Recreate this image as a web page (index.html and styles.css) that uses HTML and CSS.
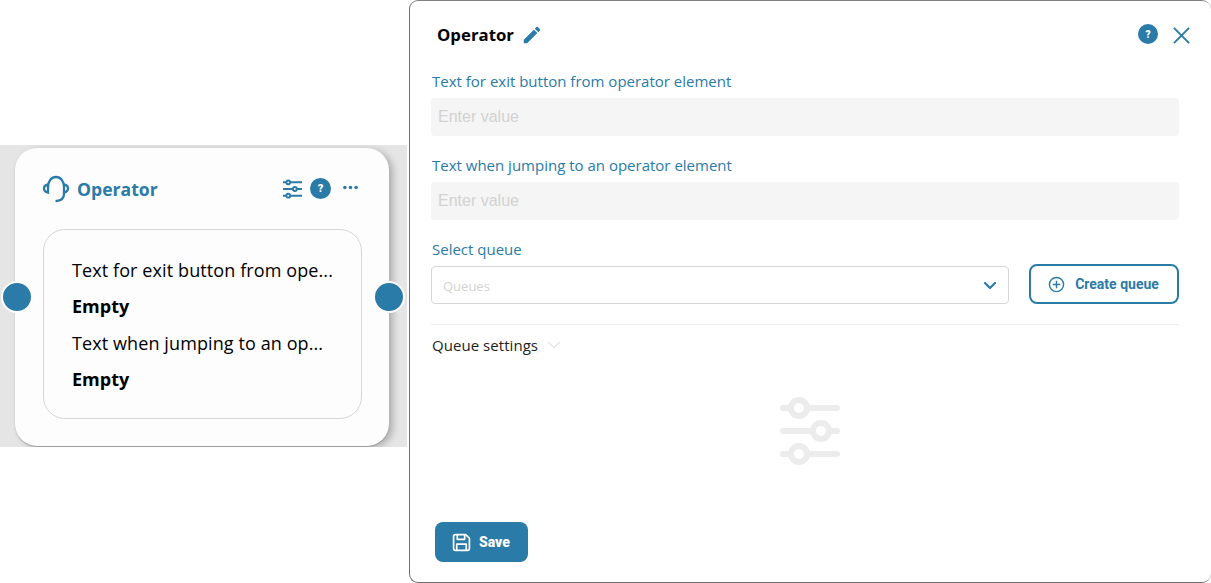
FILE: index.html
```html
<!DOCTYPE html>
<html lang="en">
<head>
    <meta charset="UTF-8">
    <title>Operator</title>
    <link rel="stylesheet" href="styles.css">
</head>
<body>
    <div class="canvas">
        <div class="node">
            <span class="port port-left"></span>
            <span class="port port-right"></span>
            <div class="node-head">
                <svg class="node-icon" viewBox="0 0 28 28" fill="none" stroke="#2a7ba8" stroke-width="2.300" stroke-linecap="round">
                    <path d="M6 12.500C6 6 9.500 2 14 2s8 4 8 10.500V19c0 4-3 6.500-7.500 7"/>
                    <path d="M6 9.500C3.500 10 2 11.500 2 13.500s1.500 3.500 4 4z"/>
                    <path d="M22 9.500c2.500.5 4 2 4 4s-1.500 3.500-4 4"/>
                </svg>
                <span class="node-title">Operator</span>
                <svg class="node-sliders" viewBox="0 0 20 20" fill="none" stroke="#2a7ba8" stroke-width="2.100">
                    <path d="M0 3h3.500M7.500 3H20M0 10h10.500M14.500 10H20M0 17h3.500M7.500 17H20"/>
                    <circle cx="5.500" cy="3" r="2"/><circle cx="12.500" cy="10" r="2"/><circle cx="5.500" cy="17" r="2"/>
                </svg>
                <span class="help node-help">?</span>
                <svg class="node-more" viewBox="0 0 16 4" fill="#2a7ba8">
                    <circle cx="2" cy="2" r="1.900"/><circle cx="8" cy="2" r="1.900"/><circle cx="14" cy="2" r="1.900"/>
                </svg>
            </div>
            <div class="node-body">
                <p class="node-line">Text for exit button from ope...</p>
                <p class="node-value">Empty</p>
                <p class="node-line">Text when jumping to an op...</p>
                <p class="node-value">Empty</p>
            </div>
        </div>
    </div>

    <div class="drawer">
        <div class="drawer-head">
            <span class="drawer-title">Operator</span>
            <svg class="pencil" viewBox="0 0 24 24" fill="#2a7ba8">
                <path d="M3 17.250V21h3.750L17.810 9.940l-3.750-3.750L3 17.250zM20.710 7.040a1 1 0 0 0 0-1.410l-2.340-2.340a1 1 0 0 0-1.410 0l-1.830 1.830 3.750 3.750 1.830-1.830z"/>
            </svg>
            <span class="help drawer-help">?</span>
            <svg class="close" viewBox="0 0 18 18" fill="none" stroke="#2a7ba8" stroke-width="2">
                <path d="M1 1l16 16M17 1L1 17"/>
            </svg>
        </div>

        <label class="field-label">Text for exit button from operator element</label>
        <input class="field-input" type="text" placeholder="Enter value">

        <label class="field-label">Text when jumping to an operator element</label>
        <input class="field-input" type="text" placeholder="Enter value">

        <label class="field-label">Select queue</label>
        <div class="queue-row">
            <div class="queue-select">
                <span class="queue-placeholder">Queues</span>
                <svg viewBox="0 0 14 9" fill="none" stroke="#2a7ba8" stroke-width="2.200" stroke-linecap="round" stroke-linejoin="round">
                    <path d="M2 2l5 5 5-5"/>
                </svg>
            </div>
            <button class="create-btn" type="button">
                <svg viewBox="0 0 18 18" fill="none" stroke="#2a7ba8" stroke-width="1.500">
                    <circle cx="9" cy="9" r="7.500"/>
                    <path d="M9 5v8M5 9h8"/>
                </svg>
                Create queue
            </button>
        </div>

        <div class="settings">
            <span>Queue settings</span>
            <svg viewBox="0 0 14 8" fill="none" stroke="#e6e6e6" stroke-width="1.400">
                <path d="M1 1l6 5.500L13 1"/>
            </svg>
        </div>

        <div class="empty">
            <svg viewBox="0 0 60 68" fill="none" stroke="#ececec">
                <path d="M3 11h54M3 34h54M3 57h54" stroke-width="6" stroke-linecap="round"/>
                <circle cx="19" cy="11" r="8" fill="#fff" stroke-width="6"/>
                <circle cx="41" cy="34" r="8" fill="#fff" stroke-width="6"/>
                <circle cx="19" cy="57" r="8" fill="#fff" stroke-width="6"/>
            </svg>
        </div>

        <button class="save-btn" type="button">
            <svg viewBox="0 0 18 18" fill="none" stroke="#fff" stroke-width="1.600" stroke-linejoin="round">
                <path d="M1.500 3a1.500 1.500 0 0 1 1.500-1.500h10L16.500 5v10a1.500 1.500 0 0 1-1.500 1.500H3A1.500 1.500 0 0 1 1.500 15z"/>
                <path d="M5 1.500V6h7V1.500M4.500 16.500V10.500h9v6"/>
            </svg>
            Save
        </button>
    </div>
</body>
</html>
```

FILE: styles.css
```css
* {
    box-sizing: border-box;
}
body {
    margin: 0;
    height: 583px;
    overflow: hidden;
    display: flex;
    background: #fff;
    font-family: "Open Sans", sans-serif;
}
.canvas {
    width: 407px;
    height: 302px;
    margin: 145px 2px 0 0;
    padding: 3px 0 0 15px;
    background: #e5e5e5;
    overflow: hidden;
}
.node {
    position: relative;
    width: 374px;
    height: 298px;
    padding: 27px 27px 0 28px;
    background: #fdfdfd;
    border-radius: 22px;
    box-shadow: 4px 2px 7px rgba(0,0,0,0.24), 0 1px 1px rgba(0,0,0,0.2);
}
.port {
    position: absolute;
    top: 133px;
    width: 32px;
    height: 32px;
    background: #2a7ba8;
    border: 2px solid #fff;
    border-radius: 50%;
}
.port-left {
    left: -14px;
}
.port-right {
    right: -16px;
}
.node-head {
    display: flex;
    align-items: center;
    height: 28px;
    margin-left: -1px;
}
.node-icon {
    width: 28px;
    height: 28px;
}
.node-title {
    margin-left: 7px;
    font-size: 17.600px;
    font-weight: 700;
    color: #2a7ba8;
    flex: 1;
}
.node-sliders {
    width: 19px;
    height: 22px;
}
.help {
    display: flex;
    align-items: center;
    justify-content: center;
    width: 21px;
    height: 21px;
    background: #2a7ba8;
    border-radius: 50%;
    color: #fff;
    font-family: Roboto, sans-serif;
    font-size: 11px;
    font-weight: 900;
}
.node-help {
    margin-left: 8px;
    margin-bottom: 1px;
}
.node-more {
    width: 15px;
    height: 5px;
    margin: 0 4px 3px 12px;
}
.node-body {
    height: 190px;
    margin-top: 26px;
    padding: 28px 0 0 28px;
    border: 1.500px solid #d6d6d6;
    border-radius: 22px;
}
.node-line, .node-value {
    margin: 0 0 12.400px;
    height: 24px;
    line-height: 24px;
    color: #000;
    white-space: nowrap;
}
.node-line {
    font-size: 18px;
    letter-spacing: 0.1px;
}
.node-value {
    font-size: 18px;
    font-weight: 700;
}
.drawer {
    display: flex;
    flex-direction: column;
    width: 802px;
    height: 583px;
    padding: 0 30px 0 22px;
    background: #fff;
    border: 1px solid #707070;
    border-right: 0;
    border-top-color: #808080;
    border-radius: 9px;
}
.drawer-head {
    display: flex;
    align-items: center;
    height: 34px;
    margin: 17px 0 0 5px;
}
.drawer-title {
    font-size: 16.800px;
    font-weight: 700;
    color: #000;
    margin-bottom: 1px;
}
.pencil {
    width: 22px;
    height: 22px;
    margin: 0 0 1px 7px;
}
.drawer-help {
    width: 20px;
    height: 20px;
    margin: 0 15px 2px auto;
    font-size: 10px;
}
.close {
    width: 17px;
    height: 17px;
    margin-right: -9px;
}
.field-label {
    display: block;
    margin-top: 19px;
    margin-bottom: 1px;
    height: 20px;
    line-height: 20px;
    font-size: 15px;
    color: #2a7ba8;
}
.field-input {
    display: block;
    width: 748px;
    height: 38px;
    margin: 6px 0 0 -1px;
    padding: 0 7px;
    background: #f5f5f5;
    border: 0;
    border-radius: 4px;
    font-family: "Liberation Sans", sans-serif;
    font-size: 16px;
}
.field-input::placeholder {
    color: #d2d2d2;
}
.queue-row {
    display: flex;
    align-items: flex-end;
    gap: 20px;
    width: 748px;
    height: 61px;
    margin: 4px 0 0 -1px;
    padding-bottom: 20px;
    border-bottom: 1px solid #efefef;
}
.queue-select {
    display: flex;
    align-items: center;
    justify-content: space-between;
    width: 578px;
    height: 38px;
    padding: 0 11px;
    border: 1px solid #d6d6d6;
    border-radius: 4px;
    font-size: 13px;
    color: #d2d2d2;
}
.queue-placeholder {
    margin-top: 1px;
}
.queue-select svg {
    width: 14px;
    height: 9px;
}
.create-btn {
    display: flex;
    align-items: center;
    justify-content: center;
    gap: 10px;
    width: 150px;
    height: 40px;
    padding: 0 1px 0 0;
    background: #fff;
    border: 2px solid #2a7ba8;
    border-radius: 8px;
    font-family: Roboto, sans-serif;
    font-size: 14px;
    font-weight: 700;
    color: #2a7ba8;
}
.create-btn svg {
    width: 17px;
    height: 17px;
}
.settings {
    display: flex;
    align-items: center;
    gap: 9px;
    height: 20px;
    margin-top: 10px;
    font-size: 15px;
    letter-spacing: 0.05px;
    color: #222;
}
.settings svg {
    width: 14px;
    height: 8px;
}
.empty {
    display: flex;
    justify-content: center;
    margin: 42px 0 0 6px;
}
.empty svg {
    width: 60px;
    height: 68px;
}
.save-btn {
    display: flex;
    align-items: center;
    gap: 8px;
    width: 93px;
    height: 40px;
    margin: 57px 0 0 3px;
    padding: 0 0 0 17px;
    background: #2a7ba8;
    border: 0;
    border-radius: 8px;
    font-family: Roboto, sans-serif;
    font-size: 14px;
    font-weight: 900;
    color: #fff;
}
.save-btn svg {
    width: 19px;
    height: 19px;
}
```
